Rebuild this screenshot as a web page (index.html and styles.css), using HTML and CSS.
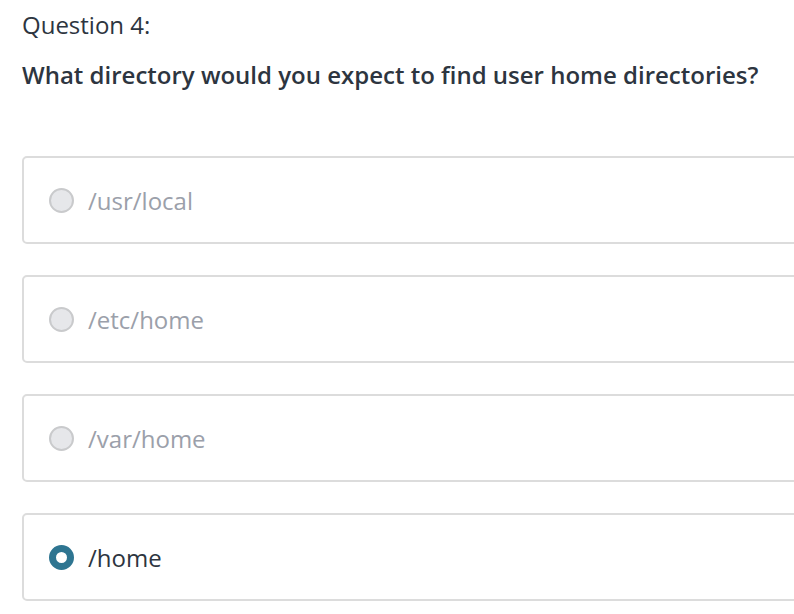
FILE: index.html
```html
<!DOCTYPE html>
<html>
<head>
<meta charset="utf-8">
<link rel="stylesheet" href="styles.css">
</head>
<body>
<div class="quiz">
  <div class="q-label">Question 4:</div>
  <h2 class="q-text">What directory would you expect to find user home directories?</h2>
  <div class="options">
    <label class="option"><span class="radio"></span><span class="opt-text">/usr/local</span></label>
    <label class="option"><span class="radio"></span><span class="opt-text">/etc/home</span></label>
    <label class="option"><span class="radio"></span><span class="opt-text">/var/home</span></label>
    <label class="option selected"><span class="radio"></span><span class="opt-text">/home</span></label>
  </div>
</div>
</body>
</html>
```
FILE: styles.css
```css
html, body {
  margin: 0;
  padding: 0;
  overflow: hidden;
  background: #fff;
}
.quiz {
  padding: 9px 0 0 22px;
  font-family: "Open Sans", sans-serif;
  width: 800px;
}
.q-label {
  font-size: 24px;
  line-height: 32px;
  color: #2d3540;
}
.q-text {
  margin: 18px 0 0 0;
  font-size: 24px;
  line-height: 32px;
  font-weight: 600;
  color: #2d3540;
}
.options {
  margin-top: 65px;
  display: flex;
  flex-direction: column;
  gap: 31px;
}
.option {
  display: flex;
  align-items: center;
  height: 84px;
  border: 2px solid #dcdcdc;
  border-radius: 5px;
  padding-left: 25px;
  gap: 14px;
}
.radio {
  box-sizing: border-box;
  width: 25px;
  height: 25px;
  border-radius: 50%;
  border: 2px solid #c9cacc;
  background: #e6e7ea;
}
.opt-text {
  font-size: 24px;
  color: #9ba0aa;
}
.option.selected .radio {
  border: 7px solid #2e7591;
  background: #fff;
}
.option.selected .opt-text {
  color: #2d3540;
}
```
